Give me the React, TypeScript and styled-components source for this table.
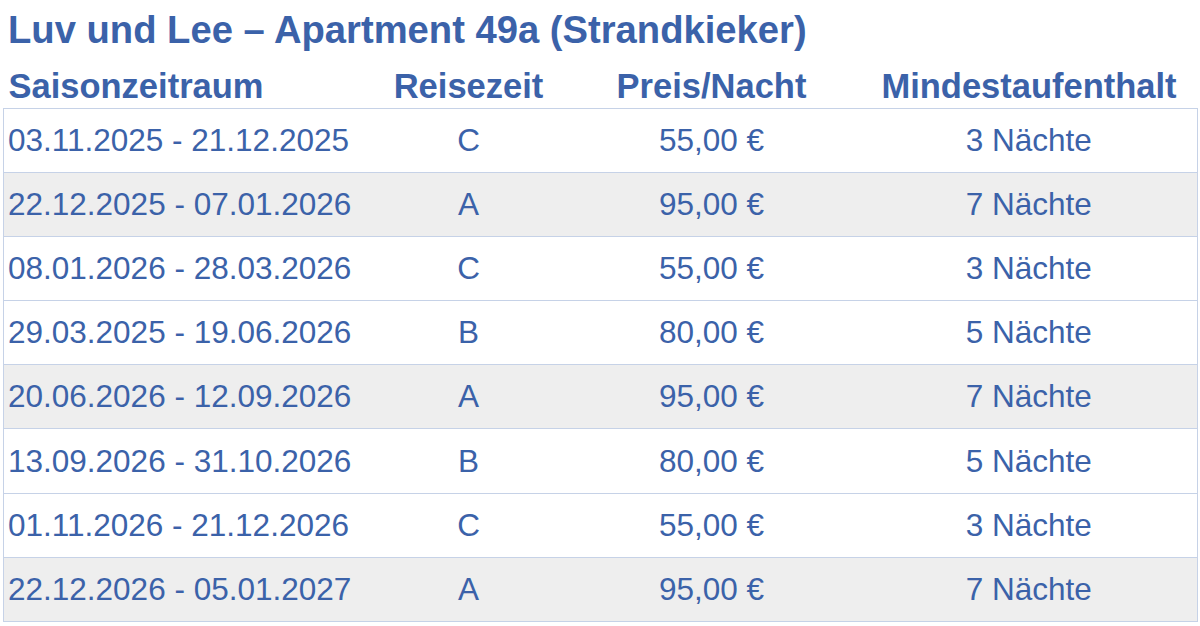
import React from "react";
import styled, {createGlobalStyle} from "styled-components";

const GlobalStyle = createGlobalStyle`
	html, body {
		margin: 0;
		padding: 0;
		background: #ffffff;
	}

	body {
		font-family: "Liberation Sans", Arial, sans-serif;
		color: #3b62a9;
	}
`;

const Page = styled.div`
	padding: 8px 3px 0 3px;
`;

const Title = styled.h1`
	margin: 0 0 0 5px;
	font-size: 38.2px;
	line-height: 44px;
	font-weight: 700;
`;

const PriceTable = styled.table`
	width: 100%;
	table-layout: fixed;
	border-collapse: collapse;
`;

const HeadCell = styled.th<{$align?: "left" | "center"}>`
	font-size: 34.5px;
	font-weight: 700;
	line-height: 40px;
	padding: 14px 5px 2px;
	text-align: ${p => p.$align ?? "center"};
	white-space: nowrap;
`;

const Row = styled.tr<{$shaded: boolean}>`
	background: ${p => (p.$shaded ? "#eeeeee" : "#ffffff")};
	border: 1px solid #c6d2e7;
`;

const Cell = styled.td<{$align?: "left" | "center"}>`
	height: 63.1px;
	padding: 0 4px;
	font-size: 31.5px;
	text-align: ${p => p.$align ?? "center"};
	vertical-align: middle;
	white-space: nowrap;
`;

type Season_T = {
	range: string;
	period: string;
	price: string;
	nights: number;
};

const seasons: Season_T[] = [
	{range: "03.11.2025 - 21.12.2025", period: "C", price: "55,00 €", nights: 3},
	{range: "22.12.2025 - 07.01.2026", period: "A", price: "95,00 €", nights: 7},
	{range: "08.01.2026 - 28.03.2026", period: "C", price: "55,00 €", nights: 3},
	{range: "29.03.2025 - 19.06.2026", period: "B", price: "80,00 €", nights: 5},
	{range: "20.06.2026 - 12.09.2026", period: "A", price: "95,00 €", nights: 7},
	{range: "13.09.2026 - 31.10.2026", period: "B", price: "80,00 €", nights: 5},
	{range: "01.11.2026 - 21.12.2026", period: "C", price: "55,00 €", nights: 3},
	{range: "22.12.2026 - 05.01.2027", period: "A", price: "95,00 €", nights: 7},
];

export default function App () {
	return (
		<Page>
			<GlobalStyle />
			<Title>Luv und Lee – Apartment 49a (Strandkieker)</Title>
			<PriceTable>
				<colgroup>
					<col style={{width: 371}} />
					<col style={{width: 188}} />
					<col style={{width: 298}} />
					<col style={{width: 337}} />
				</colgroup>
				<thead>
				<tr>
					<HeadCell $align="left">Saisonzeitraum</HeadCell>
					<HeadCell>Reisezeit</HeadCell>
					<HeadCell>Preis/Nacht</HeadCell>
					<HeadCell>Mindestaufenthalt</HeadCell>
				</tr>
				</thead>
				<tbody>
				{seasons.map((s, i) => (
					<Row key={s.range} $shaded={i % 3 === 1}>
						<Cell $align="left">{s.range}</Cell>
						<Cell>{s.period}</Cell>
						<Cell>{s.price}</Cell>
						<Cell>{s.nights} Nächte</Cell>
					</Row>
				))}
				</tbody>
			</PriceTable>
		</Page>
	);
}
